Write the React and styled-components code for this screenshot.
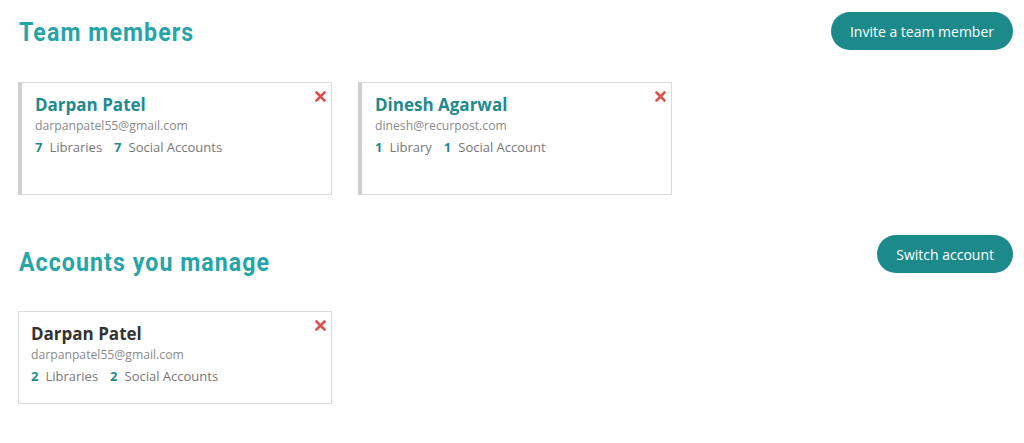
import React from "react";
import styled, { createGlobalStyle } from "styled-components";

const Global = createGlobalStyle`
  html, body { margin: 0; padding: 0; background: #fff; }
  body { font-family: "Open Sans", "Liberation Sans", sans-serif; }
`;

const Page = styled.div`
  padding: 12px 11px 0 18px;
`;

const Section = styled.section`
  margin-bottom: ${(p) => p.$mb || 0}px;
`;

const Header = styled.div`
  display: flex;
  justify-content: space-between;
  align-items: flex-start;
  margin-bottom: ${(p) => p.$mb}px;
`;

const Title = styled.h2`
  margin: ${(p) => p.$mt}px 0 0 1px;
  font-family: Roboto, "Liberation Sans", sans-serif;
  font-weight: 700;
  font-size: 26px;
  line-height: 30px;
  letter-spacing: 1.2px;
  color: #26a5a9;
  transform: scaleX(0.89);
  transform-origin: left center;
  white-space: nowrap;
`;

const Button = styled.button`
  height: 38px;
  padding: 0 19px;
  border: none;
  border-radius: 19px;
  background: #1c8a8b;
  color: #fff;
  font-family: "Open Sans", "Liberation Sans", sans-serif;
  font-size: 14px;
  cursor: pointer;
`;

const CardRow = styled.div`
  display: flex;
  gap: 26px;
`;

const Card = styled.div`
  position: relative;
  box-sizing: border-box;
  width: 314px;
  min-height: ${(p) => p.$minH || 0}px;
  border: 1px solid #dcdcdc;
  border-left: ${(p) => (p.$accent ? "4px solid #cfcfcf" : "1px solid #dcdcdc")};
  padding: 10px 12px 16px ${(p) => (p.$accent ? 13 : 12)}px;
`;

const Name = styled.div`
  font-weight: 700;
  font-size: 17px;
  line-height: 23px;
  color: ${(p) => (p.$dark ? "#333" : "#1f8a8d")};
`;

const Email = styled.div`
  font-size: 12.2px;
  line-height: 20px;
  color: #8a8a8a;
`;

const Stats = styled.div`
  display: flex;
  gap: 12px;
  font-size: 13px;
  line-height: 22px;
  color: #777;
`;

const Stat = styled.span`
  b {
    color: #1f8a8d;
    font-weight: 700;
    margin-right: 7px;
  }
`;

const Close = styled.button`
  position: absolute;
  top: 8px;
  right: 5px;
  width: 11px;
  height: 11px;
  padding: 0;
  border: none;
  background: none;
  cursor: pointer;
  svg { display: block; }
`;

function CloseIcon() {
  return (
    <Close aria-label="Remove">
      <svg width="11" height="11" viewBox="0 0 11 11">
        <path d="M1.5 1.5 L9.5 9.5 M9.5 1.5 L1.5 9.5" stroke="#d9534f" strokeWidth="2.6" strokeLinecap="round" />
      </svg>
    </Close>
  );
}

function MemberCard({ name, email, libs, accts, accent, dark, minH }) {
  return (
    <Card $accent={accent} $minH={minH}>
      <CloseIcon />
      <Name $dark={dark}>{name}</Name>
      <Email>{email}</Email>
      <Stats>
        <Stat><b>{libs}</b>{libs === 1 ? "Library" : "Libraries"}</Stat>
        <Stat><b>{accts}</b>{accts === 1 ? "Social Account" : "Social Accounts"}</Stat>
      </Stats>
    </Card>
  );
}

export default function App() {
  return (
    <>
      <Global />
      <Page>
        <Section $mb={40}>
          <Header $mb={32}>
            <Title $mt={5}>Team members</Title>
            <Button>Invite a team member</Button>
          </Header>
          <CardRow>
            <MemberCard accent minH={113} name="Darpan Patel" email="darpanpatel55@gmail.com" libs={7} accts={7} />
            <MemberCard accent minH={113} name="Dinesh Agarwal" email="dinesh@recurpost.com" libs={1} accts={1} />
          </CardRow>
        </Section>
        <Section>
          <Header $mb={34}>
            <Title $mt={12}>Accounts you manage</Title>
            <Button>Switch account</Button>
          </Header>
          <CardRow>
            <MemberCard dark name="Darpan Patel" email="darpanpatel55@gmail.com" libs={2} accts={2} />
          </CardRow>
        </Section>
      </Page>
    </>
  );
}
